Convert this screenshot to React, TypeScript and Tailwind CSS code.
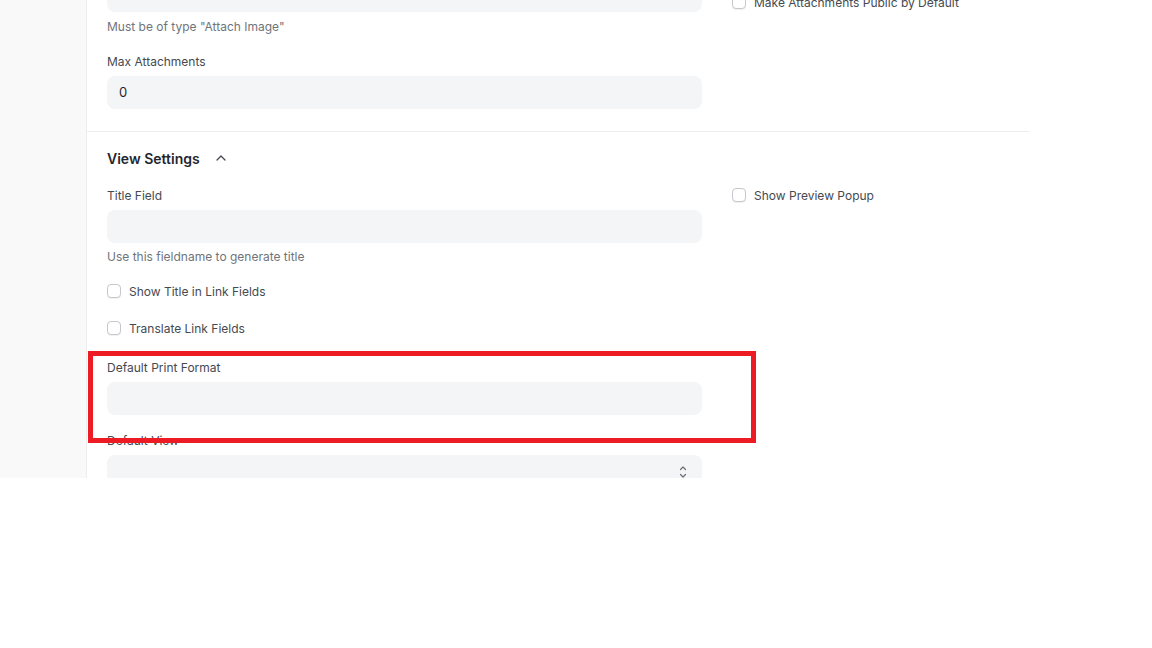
import React from "react";

function Checkbox({ label }: { label: string }) {
  return (
    <div className="flex h-[18px] items-center gap-[8px]">
      <span className="box-border h-[14px] w-[14px] shrink-0 rounded-[4px] border border-[#c5c8cc] bg-white shadow-[0_1px_1px_rgba(0,0,0,0.06)]" />
      <span className="h-[18px] text-[12px] leading-[20px] text-[#454a50]">{label}</span>
    </div>
  );
}

function Label({ children }: { children: React.ReactNode }) {
  return <div className="h-[18px] text-[12px] leading-[20px] text-[#454a50]">{children}</div>;
}

function Desc({ children }: { children: React.ReactNode }) {
  return <div className="h-[18px] text-[12px] leading-[20px] text-[#6f747a]">{children}</div>;
}

function Input({ value, select }: { value?: string; select?: boolean }) {
  return (
    <div className="relative box-border flex h-[33px] items-center rounded-[8px] bg-[#f4f5f6] px-[12px] pt-[1px] text-[13px] text-[#1f272e]">
      {value}
      {select && (
        <svg className="absolute right-[15px] top-[10px]" width="8" height="14" viewBox="0 0 8 14" fill="none">
          <polyline points="1.5,4.5 4,2 6.5,4.5" stroke="#6b6f76" strokeWidth="1.2" strokeLinecap="round" strokeLinejoin="round" />
          <polyline points="1.5,9.5 4,12 6.5,9.5" stroke="#6b6f76" strokeWidth="1.2" strokeLinecap="round" strokeLinejoin="round" />
        </svg>
      )}
    </div>
  );
}

export default function App() {
  return (
    <div className="relative h-[648px] w-[1152px] bg-white" style={{ fontFamily: "Inter, 'Noto Sans', sans-serif" }}>
      <div className="flex h-[478px] overflow-hidden">
        <div className="box-border w-[87px] shrink-0 border-r border-[#ededee] bg-[#f9f9fa]" />
        <div className="w-[942px] shrink-0 overflow-hidden bg-white">
          {/* Attachments section (tail) */}
          <div className="-mt-[21px] grid grid-cols-[595px_1fr] gap-x-[30px] px-[20px] pb-[22px]">
            <div className="flex flex-col">
              <Input />
              <div className="mt-[5px]">
                <Desc>Must be of type "Attach Image"</Desc>
              </div>
              <div className="mt-[17px]">
                <Label>Max Attachments</Label>
              </div>
              <div className="mt-[6px]">
                <Input value="0" />
              </div>
            </div>
            <div className="pt-[14px]">
              <Checkbox label="Make Attachments Public by Default" />
            </div>
          </div>
          {/* View Settings */}
          <div className="border-t border-[#ededee] px-[20px] pt-[16px]">
            <div className="flex h-[20px] items-center gap-[14px]">
              <span className="h-[20px] text-[14px] font-semibold leading-[22px] text-[#1f272e]">View Settings</span>
              <svg width="14" height="14" viewBox="0 0 14 14" fill="none">
                <polyline points="3,9 7,5 11,9" stroke="#454a50" strokeWidth="1.3" strokeLinecap="round" strokeLinejoin="round" />
              </svg>
            </div>
            <div className="mt-[18px] grid grid-cols-[595px_1fr] gap-x-[30px]">
              <div className="flex flex-col">
                <Label>Title Field</Label>
                <div className="mt-[6px]">
                  <Input />
                </div>
                <div className="mt-[4px]">
                  <Desc>Use this fieldname to generate title</Desc>
                </div>
                <div className="mt-[17px]">
                  <Checkbox label="Show Title in Link Fields" />
                </div>
                <div className="mt-[19px]">
                  <Checkbox label="Translate Link Fields" />
                </div>
                <div className="mt-[21px]">
                  <Label>Default Print Format</Label>
                </div>
                <div className="mt-[6px]">
                  <Input />
                </div>
                <div className="mt-[16px]">
                  <Label>Default View</Label>
                </div>
                <div className="mt-[6px]">
                  <Input select />
                </div>
              </div>
              <div>
                <Checkbox label="Show Preview Popup" />
              </div>
            </div>
          </div>
        </div>
      </div>
      {/* Annotation highlight box */}
      <div className="absolute left-[88px] top-[351px] box-border h-[92px] w-[668px] border-[5px] border-[#ed1c24]" />
    </div>
  );
}
